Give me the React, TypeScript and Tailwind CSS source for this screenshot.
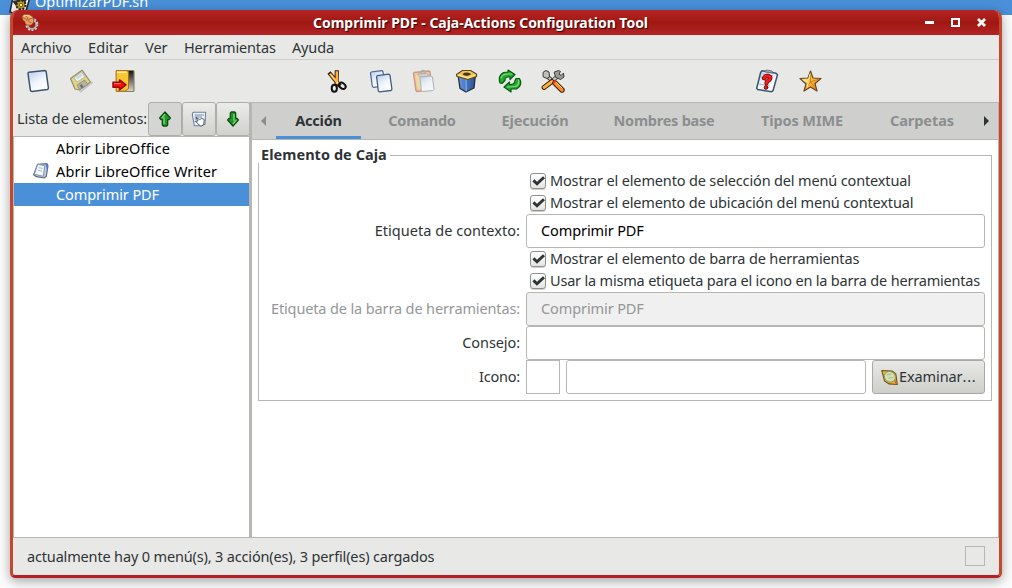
import type { ReactNode } from 'react';

function Svg({ className = '', size = 24, children }: { className?: string; size?: number; children: ReactNode }) {
  return (
    <svg width={size} height={size} viewBox="0 0 24 24" className={`shrink-0 ${className}`} strokeLinejoin="round" strokeLinecap="round" fill="none">
      {children}
    </svg>
  );
}

function Defs() {
  return (
    <svg width="0" height="0" className="absolute">
      <defs>
        <linearGradient id="paper" x1="0" y1="0" x2="0.6" y2="1">
          <stop offset="0" stopColor="#b5cbea" />
          <stop offset="0.6" stopColor="#f1f6fd" />
          <stop offset="1" stopColor="#ffffff" />
        </linearGradient>
        <linearGradient id="door" x1="0" y1="0" x2="0" y2="1">
          <stop offset="0" stopColor="#111" />
          <stop offset="1" stopColor="#d9d9d0" />
        </linearGradient>
        <linearGradient id="gold" x1="0" y1="0" x2="1" y2="1">
          <stop offset="0" stopColor="#fff0a0" />
          <stop offset="0.5" stopColor="#fdba3a" />
          <stop offset="1" stopColor="#dd7a10" />
        </linearGradient>
        <linearGradient id="bin" x1="0" y1="0" x2="1" y2="0">
          <stop offset="0" stopColor="#6a9ce0" />
          <stop offset="0.5" stopColor="#4474bd" />
          <stop offset="1" stopColor="#2c508f" />
        </linearGradient>
      </defs>
    </svg>
  );
}

const Sheet = () => (
  <Svg>
    <path d="M2.8 3.2 18.7 1.6Q19.9 1.6 20.2 2.8L22.4 19Q22.4 20.3 21.2 20.6L6 22.6Q4.8 22.5 4.4 21.3L2 4.6Q1.9 3.5 2.8 3.2Z" fill="url(#paper)" stroke="#3d5473" strokeWidth="1.5" />
  </Svg>
);
const Floppy = () => (
  <Svg className="opacity-75">
    <path d="m11.5 22.5 11.5-9" stroke="#888" opacity=".5" strokeWidth="2" />
    <path d="M1.5 9.5 13 1.2 21.5 13 10 21 6 20Z" fill="#e0cc62" stroke="#77735d" strokeWidth="1.2" />
    <path d="m5 8.7 7.5-5.5 3.5 4.6-7.3 5Z" fill="#eef4f7" stroke="#9a9989" strokeWidth=".8" />
    <path d="m7 8.5 5-3.7 1.5 2-5 3.5Z" fill="#b9d4e0" />
    <path d="m8.5 15.8 7-4.8 3.5 4.5-8 5Z" fill="#a3a38f" stroke="#66655a" strokeWidth=".8" />
    <path d="m10.5 16.5 2.3-1.5 2 3-2.3 1.5Z" fill="#4b4d46" />
  </Svg>
);
const Quit = () => (
  <Svg>
    <path d="M5 1.5h16q1 0 1 1v19q0 1-1 1H5Z" fill="url(#door)" stroke="#887f61" strokeWidth="1.2" />
    <path d="M4.5 1.7H15q1.5 0 1.5 2v16l-4 2.5h-8Z" fill="#fac631" stroke="#a96f13" />
    <path d="M5.5 3.2H14" stroke="#fff19e" strokeWidth="1.5" />
    <path d="M1 13.3h6.5v-2.4l6.5 5-6.5 5v-2.6H1Z" fill="#f51308" stroke="#9e0707" strokeWidth="1.5" />
    <path d="M2.5 14.6h6" stroke="#ff8173" />
  </Svg>
);
const Scissors = () => (
  <Svg>
    <path d="M3 3.5 14 17M10.8 1.2 10.5 16" stroke="#30220f" strokeWidth="4.2" strokeLinecap="butt" />
    <path d="M4 4.8 12.5 15M10.8 2.3V15" stroke="#ffae3b" strokeWidth="2.4" strokeLinecap="butt" />
    <path d="m5 6 4 5" stroke="#ffe089" />
    <ellipse cx="8.3" cy="19.3" rx="2.6" ry="3.5" stroke="#111" strokeWidth="2" />
    <ellipse cx="16.3" cy="16.8" rx="3.7" ry="2.6" transform="rotate(38 16.3 16.8)" stroke="#111" strokeWidth="2" />
    <circle cx="11.3" cy="13.5" r=".9" fill="#fff2a0" />
  </Svg>
);
const Copy = () => (
  <Svg>
    <path d="M2.3 3 12.5 1.7Q13.8 1.6 14 2.9L16 15.5Q16 16.8 14.8 17L4.7 18.3Q3.5 18.2 3.3 17L1.5 4.3Q1.4 3.2 2.3 3Z" fill="url(#paper)" stroke="#4d668b" strokeWidth="1.2" />
    <path d="M8.6 6.6 19.6 5.2Q20.8 5.2 21 6.4L22.9 20Q22.9 21.2 21.8 21.5L10.6 22.9Q9.5 22.8 9.3 21.6L7.6 8Q7.6 6.8 8.6 6.6Z" fill="url(#paper)" stroke="#435c81" strokeWidth="1.3" />
  </Svg>
);
const Paste = () => (
  <Svg className="opacity-70">
    <path d="m2 3.5 15-1.5 1 1 2 18-15 1.5-1-1-2.5-17Z" fill="#ecc56f" stroke="#c4746a" strokeWidth="1.5" />
    <path d="m4 6 12-1.3 1.5 14L5.5 20Z" fill="#efd48e" />
    <path d="m6 5 9-.7 1 1v2l-8 .7-1-1Z" fill="#c9c6c2" stroke="#999" />
    <path d="M9 4q0-3 2-2.5Q13 1 13 4" stroke="#999" strokeWidth="1.5" />
    <path d="m9 8 10-1 1.5 1 1.5 12.5-1 1-10.5 1-1.2-1L8 9Z" fill="url(#paper)" stroke="#8f9bad" />
  </Svg>
);
const Bin = () => (
  <Svg>
    <path d="m3 5.5 8.5 3 9-3-1.5 13.5-8 4-6-3.5Z" fill="url(#bin)" stroke="#252d3b" strokeWidth="1.3" />
    <path d="m11 10 .2 12" stroke="#8bb6f0" />
    <path d="m1.5 5.5 6-4h8L21.5 5v2.5l-8.5 3-11-3Z" fill="#f3c65a" stroke="#5d471f" strokeWidth="1.2" />
    <path d="M7.5 5q3.5-2.7 8-.5 1 1.3-2 2-5 1-6-1.5Z" fill="#45351d" />
    <path d="m3 6 10 3 7-3" stroke="#ffe8a4" />
  </Svg>
);
const Refresh = () => (
  <Svg>
    <path d="M2 14Q-.5 7 5.5 3.5L10 3V1l7 4.5-5 5V8Q7 7 7 11.5L4 14.5Z" fill="#25a82f" stroke="#075b12" strokeWidth="1.2" />
    <path d="M3 9Q4 5 10.5 5h3" stroke="#7ce17c" strokeWidth="1.1" />
    <path d="M18 9.5h3.5Q25 16 18.5 20H13v3l-7-5 5.5-5v2.5q5 .5 5.5-4Z" fill="#25a82f" stroke="#075b12" strokeWidth="1.2" />
    <path d="M20.5 11q1 5-3 6.5l-8 .5" stroke="#7ce17c" strokeWidth="1.1" />
  </Svg>
);
const Tools = () => (
  <Svg>
    <path d="m7 8 8 7" stroke="#30302e" strokeWidth="4" />
    <path d="m7 8 8 7" stroke="#c9cac7" strokeWidth="2.2" />
    <path d="m17 7-6 5" stroke="#333" strokeWidth="4.2" />
    <path d="m17 7-6 5" stroke="#cacac5" strokeWidth="2.4" />
    <path d="M2.5 3 5 1.5l3 1.5.5 5L6 9.5 2.5 8Z" fill="#bfc0bb" stroke="#393936" />
    <path d="m13.5 3 4-1.5 2 1-1.5 2.5 2 1.5 2.5-2.5.5 4-3.5 2.5-4.5-2Z" fill="#999b97" stroke="#393936" />
    <path d="m3 18.5 8-6" stroke="#2e2013" strokeWidth="4.8" />
    <path d="m3 18.5 8-6" stroke="#ffad39" strokeWidth="2.9" />
    <path d="m14 14 7 7" stroke="#2e2013" strokeWidth="5.4" />
    <path d="m14 14 7 7" stroke="#ff8925" strokeWidth="3.5" />
    <path d="m15 13 6 6" stroke="#ffd171" />
    <path d="m12.8 13.5 1.5-2" stroke="#ec2e1f" strokeWidth="2" />
  </Svg>
);
const Help = () => (
  <Svg>
    <path d="m7 1.8 14 2.4 1.5 1.5-4.5 16-1.3 1-14-2.2-1-1.3 4-16Z" fill="url(#paper)" stroke="#3d5470" strokeWidth="1.5" />
    <path d="m8 5 10 2M6 8l10 2M4.5 15l10 2" stroke="#8ea3bd" strokeWidth=".8" />
    <path d="m10 2 2-1 5 1 1 2-7-1Z" fill="#a8afb5" stroke="#596675" strokeWidth=".8" />
    <path d="M9 9.2q1.5-3 4.5-2.3 3.5 1.2.5 4.3-2.5 1-2.5 3.3" stroke="#6c0505" strokeWidth="4.2" />
    <path d="M9 9.2q1.5-3 4.5-2.3 3.5 1.2.5 4.3-2.5 1-2.5 3.3" stroke="#ff1b12" strokeWidth="2.6" />
    <circle cx="11" cy="18.5" r="1.8" fill="#ff1b12" stroke="#6c0505" />
  </Svg>
);
const Star = () => (
  <Svg>
    <path d="m11.5 2 2.5 7 8 .5-6 5 2 7.5-6.5-4-6.5 4 2-7-6-5.5 8-.5Z" fill="url(#gold)" stroke="#694420" strokeWidth="1.2" />
    <path d="M11.5 4v9L7 19M11.5 13l8-3M11.5 13l5 6" stroke="#c97618" strokeWidth=".8" />
    <path d="m11 5-1.5 6-5 .2 5 2-1.5 5" stroke="#fff0a8" strokeWidth="1" />
  </Svg>
);
const Arrow = ({ down = false }: { down?: boolean }) => (
  <Svg size={16} className={down ? 'rotate-180' : ''}>
    <path d="M12 1.5 20 10.5l-2 2.5h-2v8l-1.5 1.5h-5L8 21v-8H6l-2-2.5Z" fill="#21982a" stroke="#0b4e12" strokeWidth="2" />
    <path d="m11.5 5-4 5m3 0v9" stroke="#86df79" strokeWidth="1.8" />
  </Svg>
);
const Profile = () => (
  <Svg size={16}>
    <path d="M3 2h19l-1 18-5 2H5L2 6Z" fill="#eef4fb" stroke="#6c809b" strokeWidth="1.6" />
    <path d="M6 6h13M6 9h10M6 12h3m-3 4h3" stroke="#6a84a9" strokeWidth="1.5" />
    <path d="m8 10 5 3 3-2 4 2-1 7-4 3-5-4-3-4 3 0Z" fill="#fff" stroke="#444b51" strokeWidth="1.3" />
  </Svg>
);
const Document = () => (
  <Svg size={16}>
    <path d="m7 2 14-1 1.5 3-2.5 16-3 2.5-12-2-4-3Z" fill="#bdcbdc" stroke="#5e7187" strokeWidth="1.8" />
    <path d="m7.5 2 10 2-2 16-13-3Z" fill="#f4f8ff" stroke="#8496ab" strokeWidth="1.5" />
    <path d="m19 2 3 1-1 8Z" fill="#397ce0" />
    <path d="m9 7 5 1M8 11l5 1" stroke="#9eb8d5" strokeWidth="1.5" />
  </Svg>
);
const Browse = () => (
  <Svg size={17}>
    <path d="m1 2 15 1 5 4 2 15-12-1-6-4Z" fill="#edb62d" stroke="#6c531b" strokeWidth="1.5" />
    <ellipse cx="12.5" cy="11" rx="8.2" ry="7.3" transform="rotate(35 12.5 11)" fill="#d3dfae" stroke="#8a8b66" strokeWidth="1.2" />
    <path d="m9 8 5-1m-3 6 5-1" stroke="#a9bf8c" strokeWidth="1.6" />
    <path d="m20 17 1.5 3.5" stroke="#d46419" strokeWidth="2" />
  </Svg>
);
const Shell = () => (
  <Svg size={18}>
    <circle cx="14.5" cy="14" r="5.8" stroke="#aab1b4" strokeWidth="2.6" />
    <circle cx="14.5" cy="14" r="7.7" stroke="#cfd6d9" strokeWidth="2" strokeDasharray="2.6 2.24" strokeLinecap="butt" />
    <path d="M1.5 3 4 .8Q11-.5 15 3q3 4 1.5 8.5-2.5 4.5-7 3.5-4-1-4.5-5Q1 8 1.5 3Z" fill="#eba262" stroke="#8b4521" strokeWidth=".8" />
    <path d="M3 5q4 0 5 4M6 2q3 2 3.5 6M14.5 6q-4-1-4.5 3 .5 3 3.5 2.5" stroke="#a9562d" strokeWidth="1.1" />
    <path d="M4 2.5q6-1.5 9 1.5" stroke="#ffd7a3" strokeWidth="1.4" />
  </Svg>
);

function CheckRow({ children, spacing }: { children: string; spacing: string }) {
  return (
    <>
      <span />
      <label className="flex h-[22px] items-center pl-[4px]">
        <span className="mr-[4px] flex h-4 w-4 shrink-0 items-center justify-center rounded-[3px] border border-[#8f8f8b] bg-linear-to-b from-white to-[#e4e4e2] shadow-[0_1px_0_#d0d0ce]">
          <svg width="12" height="12" viewBox="0 0 12 12" className="overflow-visible" fill="none">
            <path d="m1.4 5.4 3.6 3.4 7-6.6" stroke="#2e3436" strokeWidth="2.9" />
          </svg>
        </span>
        <span className={`pb-0.5 ${spacing}`}>{children}</span>
      </label>
    </>
  );
}

const entry = 'h-[34px] rounded-[3px] border border-[#b6b6b3] bg-white';

const listButtons = [
  { icon: <Arrow />, look: 'bg-[#d5d5d3]' },
  { icon: <Profile />, look: 'bg-linear-to-b from-[#ececea] to-[#d0d0cd]' },
  { icon: <Arrow down />, look: 'bg-linear-to-b from-[#ececea] to-[#d0d0cd]' },
];

const tabs = [
  { label: 'Comando', look: 'ml-[9px] w-[104px] tracking-[-0.2px]' },
  { label: 'Ejecución', look: 'ml-[9px] w-[104px] tracking-[-0.15px]' },
  { label: 'Nombres base', look: 'ml-2 w-[138px] tracking-[-0.25px]' },
  { label: 'Tipos MIME', look: 'ml-[9px] w-[120px] tracking-[-0.1px]' },
  { label: 'Carpetas', look: 'ml-[9px] w-[102px] tracking-[-0.05px]' },
];

export default function App() {
  return (
    <div className="relative h-[588px] w-[1012px] overflow-hidden bg-[#fcfcfc] font-['Noto_Sans',sans-serif] text-[14.5px] leading-5 whitespace-nowrap text-[#2e3436]">
      <Defs />
      <div className="flex h-[15px] items-end overflow-hidden bg-[#4a90d9] pl-[9px] text-white">
        <svg width="22" height="15" viewBox="0 0 22 15">
          <path d="M4-3h17l-4 14-6 4-10-3Z" fill="#f5f5f5" stroke="#252525" strokeWidth="1.5" />
          <path d="m3 1 8 10 8-13" fill="#333" />
          <circle cx="12" cy="5" r="4.5" fill="#c49b22" stroke="#252525" strokeDasharray="2 1.5" strokeWidth="2" />
          <circle cx="12" cy="5" r="1.7" fill="#fff5ac" stroke="#755c15" />
        </svg>
        <span className="ml-[4px] translate-y-[-4px]">OptimizarPDF.sh</span>
      </div>

      <div className="absolute top-[10px] left-[10px] flex h-[568px] w-[992px] flex-col overflow-hidden rounded-t-[8px] rounded-b-[5px] border-x-[3px] border-b-[3px] border-x-[#c6482c] border-b-[#b52025] bg-[#e8e8e6] shadow-[0_3px_12px_rgba(0,0,0,0.36)]">
        <header className="-mx-[3px] flex h-[25px] shrink-0 items-center bg-linear-to-b from-[#b52526] via-[#a01811] to-[#b22426] pr-[14px] pl-[11px]">
          <Shell />
          <h1 className="ml-[274px] grow text-[14px] font-bold tracking-[-0.025px] text-white [text-shadow:1px_1px_1px_#350303]">Comprimir PDF - Caja-Actions Configuration Tool</h1>
          <svg width="64" height="13" viewBox="0 0 64 13" fill="none" stroke="white">
            <path d="M1 6.5h9" strokeWidth="3" />
            <path d="M28 3h7v7h-7Z" strokeWidth="2" />
            <path d="m54 3 7 7m0-7-7 7" strokeWidth="2.8" />
          </svg>
        </header>

        <nav className="flex h-[25px] shrink-0 items-center border-b border-[#cececc] pl-2">
          <span className="w-[67px] tracking-[-0.05px]">Archivo</span>
          <span className="w-[57px] tracking-[0.1px]">Editar</span>
          <span className="w-[39px]">Ver</span>
          <span className="w-[108px] tracking-[-0.15px]">Herramientas</span>
          <span className="tracking-[-0.15px]">Ayuda</span>
        </nav>

        <div className="flex h-[42px] shrink-0 items-center pl-[13px]">
          <div className="flex gap-[19px]"><Sheet /><Floppy /><Quit /></div>
          <div className="ml-[190px] flex gap-[19px]"><Scissors /><Copy /><Paste /><Bin /><Refresh /><Tools /></div>
          <div className="ml-[190px] flex gap-[20px]"><Help /><Star /></div>
        </div>

        <div className="flex min-h-0 grow">
          <aside className="flex w-[236px] shrink-0 flex-col">
            <div className="flex h-[34px] shrink-0 items-center pl-1">
              <span className="w-[131px] shrink-0 pb-0.5 tracking-[-0.1px]">Lista de elementos:</span>
              {listButtons.map((b, i) => (
                <button key={i} className={`flex h-[34px] w-[34px] shrink-0 items-center justify-center rounded-[3px] border border-[#adada9] ${b.look}`}>
                  {b.icon}
                </button>
              ))}
            </div>
            <ul className="grow border-t border-l border-[#b6b6b3] bg-white text-black">
              <li className="flex h-[23px] items-center pb-0.5 pl-[42px]"><span className="tracking-[0.12px]">Abrir LibreOffice</span></li>
              <li className="flex h-[23px] items-center pb-0.5 pl-[19px]"><Document /><span className="ml-[7px] tracking-[0.12px]">Abrir LibreOffice Writer</span></li>
              <li className="flex h-[23px] items-center bg-[#4a90d9] pb-0.5 pl-[42px] text-white"><span className="tracking-[-0.08px]">Comprimir PDF</span></li>
            </ul>
          </aside>
          <div className="z-10 w-[3px] shrink-0 bg-[#b6b6b3]" />

          <main className="flex grow flex-col border-r border-[#b6b6b3] bg-white">
            <div className="flex h-[38px] shrink-0 items-center border-y border-[#b6b6b3] bg-[#cfcfcd] font-bold text-[#8b8e8f]">
              <svg width="24" height="12" viewBox="0 0 24 12"><path d="M14 1v10L9 6Z" fill="#8b8e8f" /></svg>
              <div className="flex h-full w-[85px] items-center justify-center border-b-[3px] border-[#4a90d9] pt-px tracking-[-0.2px] text-[#2e3436]">Acción</div>
              {tabs.map((t) => (
                <div key={t.label} className={`flex shrink-0 justify-center pb-0.5 ${t.look}`}>{t.label}</div>
              ))}
              <svg className="ml-[9px]" width="12" height="12" viewBox="0 0 12 12"><path d="M2 1v10l5-5Z" fill="#2e3436" /></svg>
            </div>

            <section className="relative mt-[15px] ml-[6px] h-[246px] w-[734px] border border-[#b6b6b3] pt-[14px] pr-[6px]">
              <h2 className="absolute -top-[12px] -left-px h-[19px] bg-white pr-[3px] pl-[3px] font-bold tracking-[0.05px]">Elemento de Caja</h2>
              <div className="grid grid-cols-[261px_459px] gap-x-[6px] [&>p]:self-center [&>p]:pb-0.5 [&>p]:text-right">
                <CheckRow spacing="tracking-[-0.15px]">Mostrar el elemento de selección del menú contextual</CheckRow>
                <CheckRow spacing="tracking-[-0.155px]">Mostrar el elemento de ubicación del menú contextual</CheckRow>
                <p className="tracking-[0.04px]">Etiqueta de contexto:</p>
                <div className={`${entry} flex items-center pb-0.5 pl-[14px] tracking-[-0.1px] text-black`}>Comprimir PDF</div>
                <CheckRow spacing="tracking-[-0.155px]">Mostrar el elemento de barra de herramientas</CheckRow>
                <CheckRow spacing="tracking-[-0.19px]">Usar la misma etiqueta para el icono en la barra de herramientas</CheckRow>
                <p className="tracking-[-0.13px] text-[#959798]">Etiqueta de la barra de herramientas:</p>
                <div className="flex h-[34px] items-center rounded-[3px] border border-[#b6b6b3] bg-[#f0f0f0] pb-0.5 pl-[14px] tracking-[-0.1px] text-[#959798]">Comprimir PDF</div>
                <p className="tracking-[-0.08px]">Consejo:</p>
                <div className={entry} />
                <p className="tracking-[-0.2px]">Icono:</p>
                <div className="flex gap-[6px]">
                  <div className="h-[34px] w-[34px] shrink-0 border border-[#b6b6b3] bg-white" />
                  <div className={`${entry} grow`} />
                  <button className="flex h-[34px] w-[113px] shrink-0 items-center rounded-[3px] border border-[#a8a8a4] bg-linear-to-b from-[#e8e8e6] to-[#cececb] pl-[8px]">
                    <Browse /><span className="ml-px pb-0.5 tracking-[-0.1px]">Examinar<span className="tracking-[0.8px]">...</span></span>
                  </button>
                </div>
              </div>
            </section>
          </main>
        </div>

        <footer className="flex h-[38px] shrink-0 items-center justify-between border-t border-[#b6b6b3] px-[14px] pb-0.5">
          <span className="tracking-[-0.16px]">actualmente hay 0 menú(s), 3 acción(es), 3 perfil(es) cargados</span>
          <span className="h-5 w-5 border border-[#b6b6b3]" />
        </footer>
      </div>
    </div>
  );
}
